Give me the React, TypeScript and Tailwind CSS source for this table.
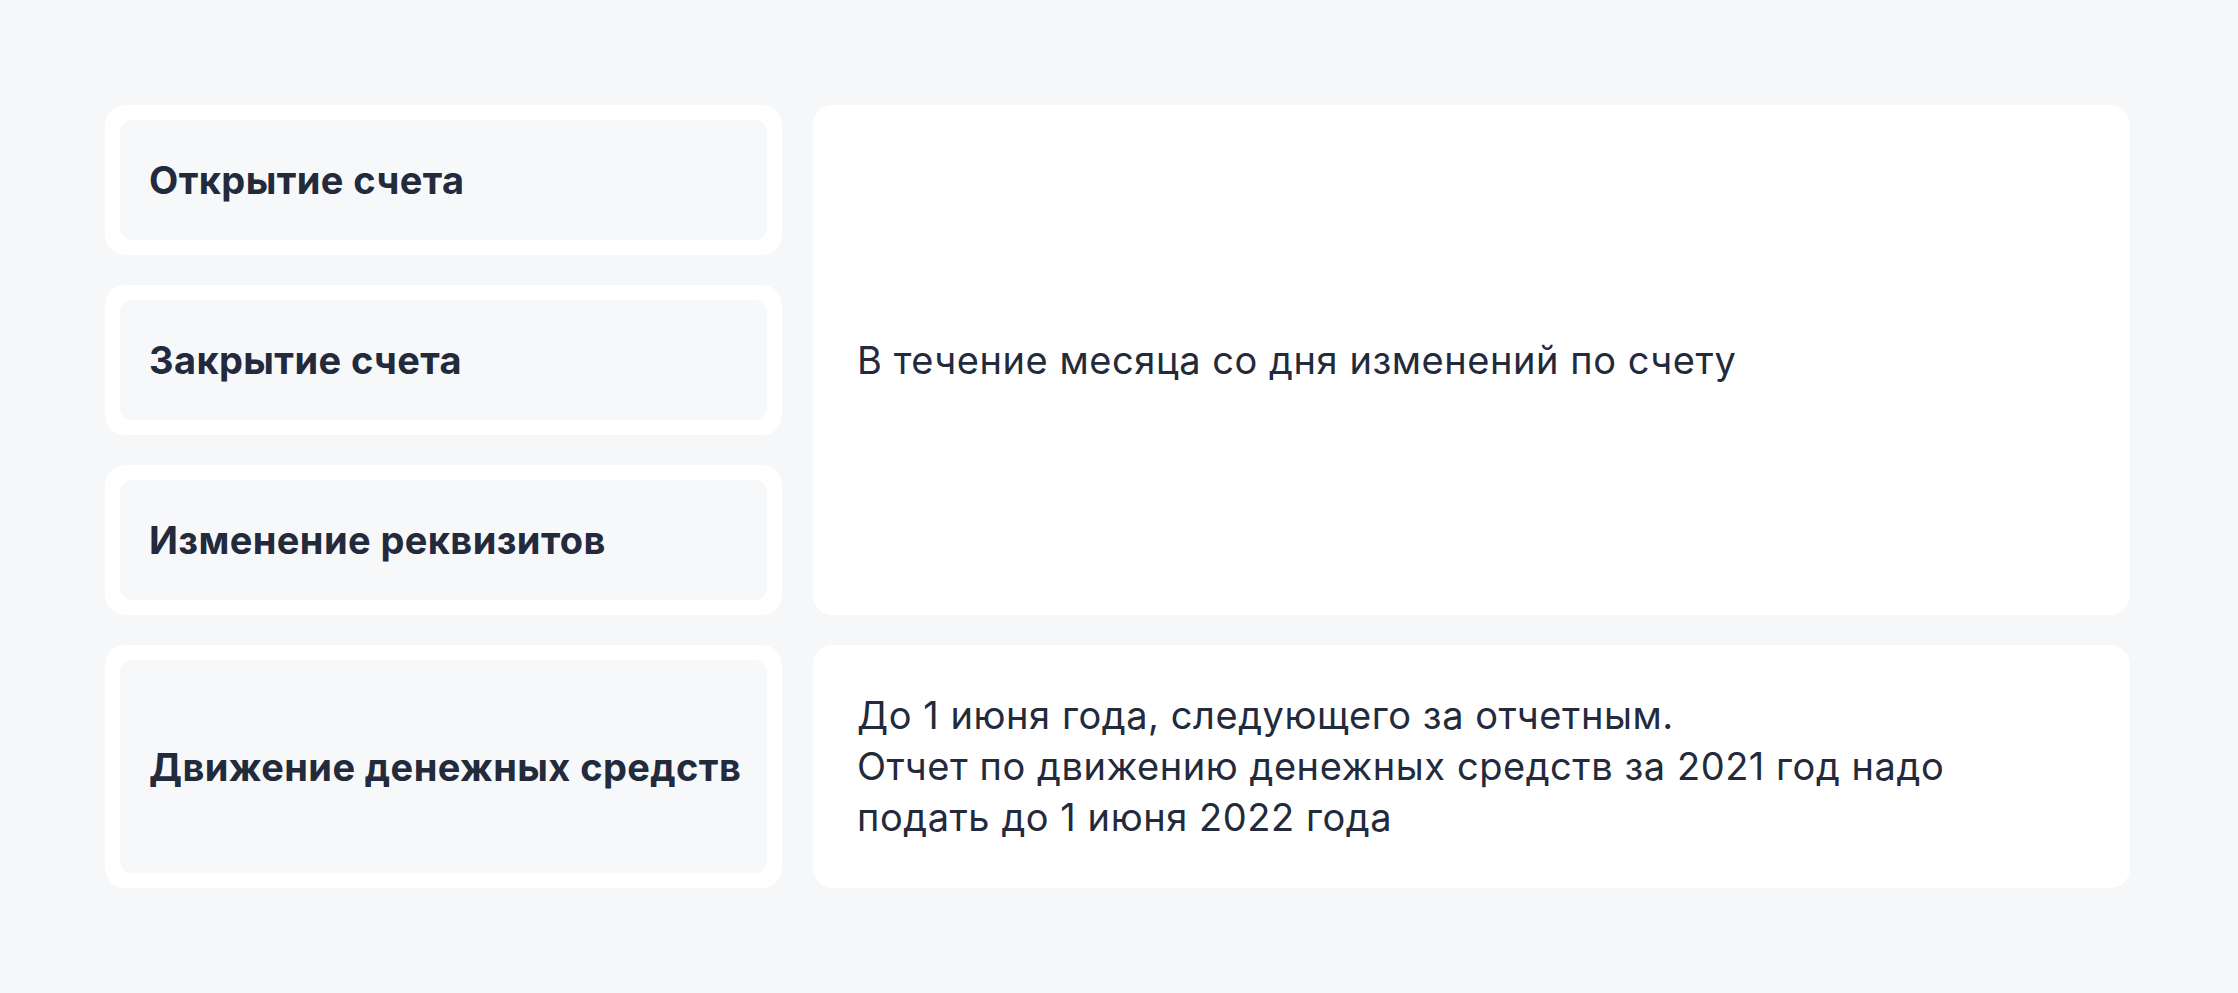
const items = ["Открытие счета", "Закрытие счета", "Изменение реквизитов"];

function Label({ text, tall }: { text: string; tall?: boolean }) {
  return (
    <div
      className={`rounded-[20px] bg-white p-[15px] ${tall ? "h-[243px]" : "h-[150px]"}`}
    >
      <div className="flex h-full items-center rounded-[12px] bg-[#f7f8fa] pl-[29px]">
        <span className="whitespace-nowrap text-[38px] font-bold leading-none tracking-[0.4px] text-[#232a3b]">
          {text}
        </span>
      </div>
    </div>
  );
}

export default function App() {
  return (
    <div
      className="min-h-[993px] bg-[#f6f7f9] px-[105px] py-[105px]"
      style={{ fontFamily: "Inter, 'Noto Sans', sans-serif" }}
    >
      <div className="grid grid-cols-[677px_1317px] gap-x-[31px] gap-y-[30px]">
        {/* first group: three events, one deadline */}
        <div className="flex flex-col gap-[30px]">
          {items.map((t) => (
            <Label key={t} text={t} />
          ))}
        </div>
        <div className="flex items-center rounded-[20px] bg-white px-[44px]">
          <p className="text-[38px] leading-[51px] tracking-[0.55px] text-[#232a3b]">
            В течение месяца со дня изменений по счету
          </p>
        </div>

        {/* second group */}
        <Label text="Движение денежных средств" tall />
        <div className="flex items-center rounded-[20px] bg-white px-[44px]">
          <p className="text-[38px] leading-[51px] tracking-[0.55px] text-[#232a3b]">
            <span className="block">До 1 июня года, следующего за отчетным.</span>
            <span className="block">
              Отчет по движению денежных средств за 2021 год надо
            </span>
            <span className="block">подать до 1 июня 2022 года</span>
          </p>
        </div>
      </div>
    </div>
  );
}
